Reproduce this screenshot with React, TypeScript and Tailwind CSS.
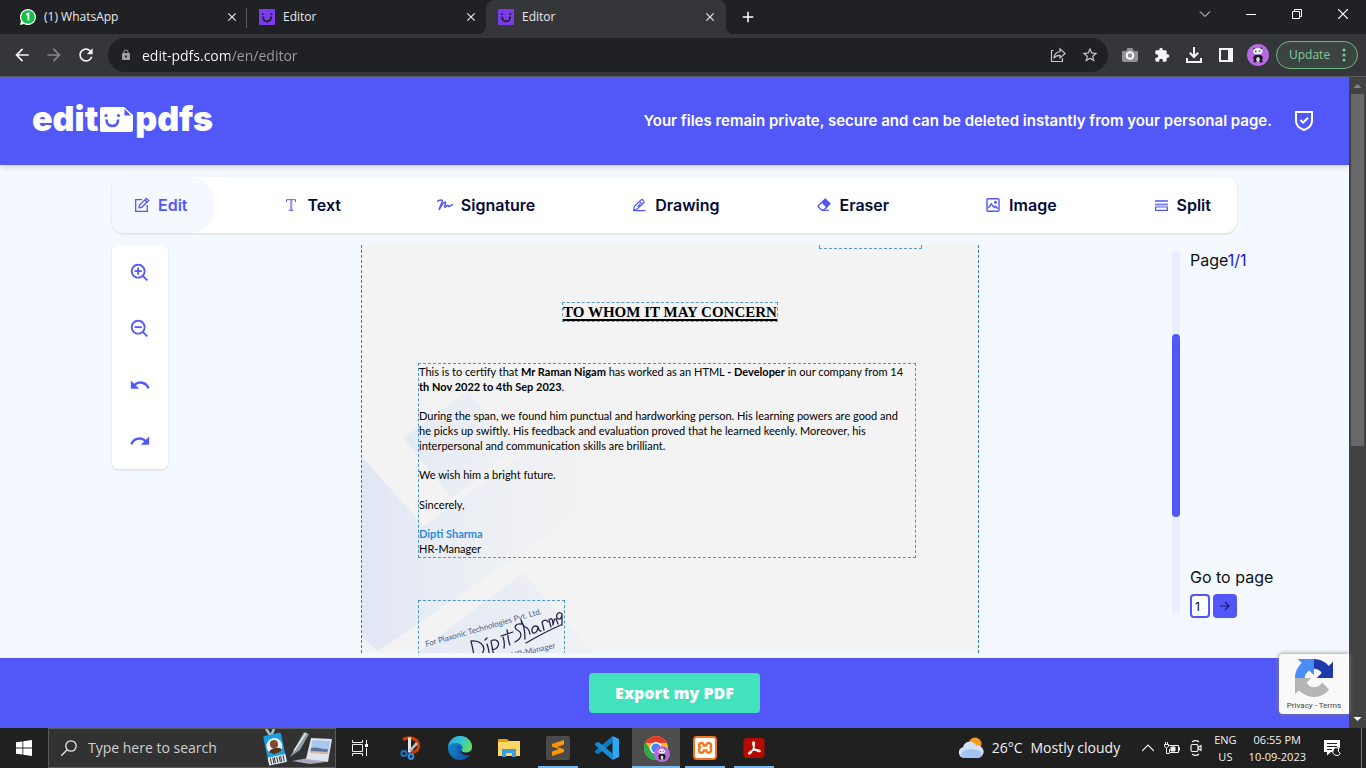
import type { ReactNode } from "react";
import { MdUndo, MdRedo, MdRefresh, MdArrowBack, MdArrowForward, MdLock, MdStarBorder, MdExtension, MdClose, MdAdd } from "react-icons/md";
import { BiZoomIn, BiZoomOut } from "react-icons/bi";
import { SiXampp } from "react-icons/si";

const ui = "font-['Open_Sans','Noto_Sans',sans-serif]";

function EditorMark() {
  return (
    <svg viewBox="0 0 16 16" className="size-4 shrink-0" aria-hidden="true">
      <rect width="16" height="16" rx="1" fill="#7c3aed" />
      <circle cx="3.8" cy="5" r="1" fill="#202124" />
      <circle cx="12.4" cy="5" r="1" fill="#202124" />
      <path d="M4.2 7.6v1a3.9 3.9 0 0 0 7.8 0v-1" fill="none" stroke="#202124" strokeWidth="1.9" />
    </svg>
  );
}

function WhatsAppMark() {
  return (
    <svg viewBox="0 0 16 16" className="size-4 shrink-0" aria-hidden="true">
      <path d="M0 16l1-4A8 8 0 1 1 4 15z" fill="#fff" />
      <circle cx="8" cy="8" r="6.8" fill="#12c143" />
      <path d="M6.2 5.6 8.4 4.4V11.6" stroke="#fff" strokeWidth="1.8" fill="none" />
    </svg>
  );
}

function Tab({ label, icon, active, divider }: { label: string; icon: ReactNode; active?: boolean; divider?: boolean }) {
  return (
    <div className={active ? "relative flex w-[240px] items-center rounded-t-lg bg-[#35363a] pl-3 pr-[9px]" : "relative flex w-[239px] items-center pl-3 pr-2"}>
      {active && (
        <>
          <span className="absolute bottom-0 right-full size-2 bg-[radial-gradient(circle_at_0_0,transparent_8px,#35363a_8px)]" />
          <span className="absolute bottom-0 left-full size-2 bg-[radial-gradient(circle_at_100%_0,transparent_8px,#35363a_8px)]" />
        </>
      )}
      <button type="button" className="flex flex-1 items-center gap-2 text-left text-xs text-[#e8eaed]">
        {icon}
        {label}
      </button>
      <button type="button" aria-label={"Close " + label} className="text-[#e8eaed]">
        <MdClose className="size-[14px]" />
      </button>
      {divider && <span className="absolute right-0 top-2 h-5 w-px bg-[#55575b]" />}
    </div>
  );
}

function Panda({ className }: { className: string }) {
  return (
    <svg viewBox="0 0 22 22" className={className} aria-hidden="true">
      <circle cx="11" cy="11" r="11" fill="#b66ae0" />
      <ellipse cx="11" cy="14" rx="4.800" ry="3.400" fill="#1c1720" />
      <ellipse cx="11" cy="15.5" rx="1.800" ry="2.600" fill="#ddd" />
      <circle cx="7.400" cy="4.8" r="1.100" fill="#1c1720" />
      <circle cx="14.200" cy="4.6" r="1.100" fill="#1c1720" />
      <ellipse cx="10.8" cy="7.200" rx="4.600" ry="3.300" fill="#eee" />
      <circle cx="8.8" cy="7.400" r=".8" fill="#333" />
      <circle cx="12.600" cy="7" r=".8" fill="#333" />
      <ellipse cx="8" cy="17.2" rx="1.500" ry="1.300" fill="#1c1720" />
      <ellipse cx="14" cy="17.2" rx="1.500" ry="1.300" fill="#1c1720" />
    </svg>
  );
}

function BrowserChrome() {
  return (
    <div className={ui + " shrink-0 bg-[#202124]"}>
      <div className="flex h-[34px] pl-2">
        <Tab label="(1) WhatsApp" icon={<WhatsAppMark />} divider />
        <Tab label="Editor" icon={<EditorMark />} />
        <Tab label="Editor" icon={<EditorMark />} active />
        <button type="button" aria-label="New tab" className="ml-[11px] flex w-[22px] items-center justify-center text-white">
          <MdAdd className="size-[18px]" />
        </button>
        <div className="ml-auto flex pb-[6px] text-white">
          <button type="button" aria-label="Search tabs" className="flex w-[46px] items-center justify-center">
            <svg viewBox="0 0 12 12" className="size-3" fill="none" stroke="currentColor"><path d="M1 3.5l5 5 5-5" /></svg>
          </button>
          <button type="button" aria-label="Minimize" className="flex w-[46px] items-center justify-center">
            <svg viewBox="0 0 10 10" className="size-[10px]" fill="none" stroke="currentColor"><path d="M0 5.5h10" /></svg>
          </button>
          <button type="button" aria-label="Restore" className="flex w-[46px] items-center justify-center">
            <svg viewBox="0 0 10 10" className="size-[10px]" fill="none" stroke="currentColor"><path d="M.5 2.5h7v7h-7zM2.5 2.500V.5h7v7h-2" /></svg>
          </button>
          <button type="button" aria-label="Close window" className="flex w-[46px] items-center justify-center">
            <svg viewBox="0 0 10 10" className="size-[10px]" fill="none" stroke="currentColor" strokeWidth="1.2"><path d="M0 0l10 10M10 0L0 10" /></svg>
          </button>
        </div>
      </div>
      <div className="flex h-[43px] items-center border-b border-[#5b5d62] bg-[#35363a] pl-3 pr-2">
        <div className="flex items-center gap-3 pr-3 text-[#f1f3f4]">
          <button type="button" aria-label="Back"><MdArrowBack className="size-5" /></button>
          <button type="button" aria-label="Forward" className="text-[#85878b]"><MdArrowForward className="size-5" /></button>
          <button type="button" aria-label="Reload"><MdRefresh className="size-5" /></button>
        </div>
        <div className="flex h-[34px] flex-1 items-center rounded-full bg-[#202124] pl-3 pr-[2px] text-[#c4c7cb]">
          <MdLock className="size-3 text-[#9aa0a6]" />
          <input
            aria-label="Address"
            defaultValue="edit-pdfs.com/en/editor"
            className="ml-[10px] h-6 min-w-0 flex-1 bg-[linear-gradient(90deg,#ffffff_88px,#9aa0a6_88px)] bg-clip-text text-sm text-transparent outline-none"
          />
          <button type="button" aria-label="Share" className="flex w-8 justify-center">
            <svg viewBox="0 0 16 16" className="size-4" fill="none" stroke="currentColor" strokeWidth="1.2">
              <path d="M3.500 3.500H1.500v11h11V11M10 4.500V1.800L15.200 6.500 10 11V8.400C7 8.300 5.200 9.200 3.800 11.200 4.300 7.500 6.300 5 10 4.500z" />
            </svg>
          </button>
          <button type="button" aria-label="Bookmark" className="flex w-8 justify-center"><MdStarBorder className="size-[18px] shrink-0" /></button>
        </div>
        <div className="flex items-center gap-4 pl-[14px] pr-[10px] text-[#f1f3f4]">
          <button type="button" aria-label="Screenshot extension">
            <svg viewBox="0 0 16 16" className="size-4" aria-hidden="true">
              <path d="M1 4h3l1.500-3h5L12 4h3a1 1 0 0 1 1 1v8a2 2 0 0 1-2 2H2a2 2 0 0 1-2-2V5a1 1 0 0 1 1-1z" fill="#8f9194" />
              <circle cx="8" cy="8.500" r="3.300" fill="none" stroke="#fff" strokeWidth="2" />
            </svg>
          </button>
          <button type="button" aria-label="Extensions"><MdExtension className="size-4" /></button>
          <button type="button" aria-label="Downloads">
            <svg viewBox="0 0 16 16" className="size-4" fill="none" stroke="currentColor" strokeWidth="2">
              <path d="M8 0v9.500M3.800 5.800 8 10l4.200-4.200M1 11v4h14v-4" />
            </svg>
          </button>
          <button type="button" aria-label="Side panel">
            <svg viewBox="0 0 16 16" className="size-4" aria-hidden="true"><path d="M1 1h14v14H1zM3 3v10h7V3z" fill="currentColor" fillRule="evenodd" /></svg>
          </button>
          <button type="button" aria-label="Profile" className="-mx-[3px]"><Panda className="size-[22px]" /></button>
        </div>
        <button type="button" className="flex h-7 w-[82px] items-center justify-between rounded-full border border-[#6fb985] bg-[#3b4441] pl-3 pr-[11px] text-xs text-[#81c995]">
          Update
          <svg viewBox="0 0 4 14" className="h-[14px] w-1" fill="currentColor"><circle cx="2" cy="2" r="1.500" /><circle cx="2" cy="7" r="1.500" /><circle cx="2" cy="12" r="1.500" /></svg>
        </button>
      </div>
    </div>
  );
}

function SiteHeader() {
  return (
    <header className="flex h-[88px] shrink-0 items-center justify-between bg-[#5158f7] pl-8 pr-9 text-white shadow-md">
      <a href="#home" aria-label="edit pdfs" className="flex items-center gap-[2px] pb-1 font-['Inter',sans-serif] text-[34px] font-black leading-10">
        <span>edit</span>
        <svg viewBox="0 0 33 26" className="mt-[2px] h-[26px] w-[33px]" aria-hidden="true">
          <path d="M2 0h22l9 8v15a2 2 0 0 1-2 2H2a2 2 0 0 1-2-2V2a2 2 0 0 1 2-2z" fill="#fff" />
          <path d="M24.500 2v6.500h6.500z" fill="#5158f7" />
          <circle cx="6" cy="8.500" r="1.600" fill="#5158f7" />
          <circle cx="18.500" cy="8.500" r="1.600" fill="#5158f7" />
          <path d="M6.500 12.500c0 4 2.400 6.500 5.800 6.500s5.800-2.500 5.800-6.500" fill="none" stroke="#5158f7" strokeWidth="2.600" />
        </svg>
        <span>pdfs</span>
      </a>
      <p className="flex items-center gap-[23px] font-['Inter',sans-serif] text-[15px] font-semibold">
        Your files remain private, secure and can be deleted instantly from your personal page.
        <svg viewBox="0 0 18 20" className="h-5 w-[18px]" fill="none" stroke="currentColor" strokeWidth="2" aria-hidden="true">
          <path d="M1 1h16v9c0 4.500-3.500 7.300-8 9-4.500-1.700-8-4.500-8-9z" />
          <path d="M5.500 9l2.600 2.600L13 6.800" />
        </svg>
      </p>
    </header>
  );
}

const tools: { label: string; icon: ReactNode }[] = [
  { label: "Edit", icon: <g strokeWidth="1.300"><path d="M8 2.700H1.700v11.600h11.600V8" /><path d="M5 10.800l.6-2.700 6.800-6.800 2.200 2.200-6.800 6.800zM10.800 3l2.200 2.200" /></g> },
  { label: "Text", icon: <g strokeWidth="1"><path d="M3.500 5V2.700h9V5M8 2.700v10.600M5.700 13.300h4.600" /><path d="M8.900 3v10" opacity=".5" /></g> },
  { label: "Signature", icon: <path strokeWidth="1.500" strokeLinecap="round" strokeLinejoin="round" d="M.5 4.200c2-1.200 4.800-1.600 4.900-.4.200 1.300-2.600 5.300-3.100 8.600C4.300 8.600 6.800 5 8.200 5c1.200 0-1.400 4.600-.2 5.200 1 .4 1.600-1.900 2.700-1.900.8 0 .5 1.100 1.300 1.100 1 0 2.200-1 3.500-1.900" /> },
  { label: "Drawing", icon: <g strokeWidth="1.200"><path d="M3 13.700h11.500M2.600 13.400l.9-4 6.600-6.600a1 1 0 0 1 1.400 0l1.300 1.300a1 1 0 0 1 0 1.400l-6.600 6.600zM8.500 4.600l2.600 2.600M6.500 9.800 9.300 7" /></g> },
  { label: "Eraser", icon: <g strokeWidth="1.300"><path d="M9.200 2 14 6.800l-3.200 3.200L6 5.200z" fill="currentColor" strokeLinejoin="round" /><path d="M6 5.200 2.300 8.700c-.3.400-.3.800 0 1.100l3.200 3.200h2.400l3-3M6 13.300h6.800" /></g> },
  { label: "Image", icon: <g strokeWidth="1.400"><rect x="2" y="1.700" width="12" height="12.600" rx="1" /><path d="M3.300 11l3-4 3 3.600 1.300-1.300 2.200 2.400" /><circle cx="10.500" cy="5.300" r=".8" /></g> },
  { label: "Split", icon: <g><path strokeWidth="2" opacity=".75" d="M2 4h13M2 7.500h13" /><path strokeWidth="1.200" d="M2.600 10h11.800v3.400H2.600z" /></g> },
];

function Toolbar() {
  return (
    <nav aria-label="Tools" className="mx-28 mt-3 flex h-14 shrink-0 justify-between rounded-xl bg-white shadow-sm">
      {tools.map((tool, i) => (
        <button
          key={tool.label}
          type="button"
          className={
            i === 0
              ? "flex items-center gap-2 rounded-l-xl rounded-r-3xl bg-[#f4f8ff] pl-[22px] pr-[26px] text-base font-semibold text-[#5158f7]"
              : "flex items-center gap-2 pl-[22px] pr-[26px] text-base font-semibold text-[#030a38]"
          }
        >
          <svg viewBox="0 0 16 16" className="size-4 text-[#5158f7]" fill="none" stroke="currentColor" aria-hidden="true">{tool.icon}</svg>
          {tool.label}
        </button>
      ))}
    </nav>
  );
}

function Stamp() {
  return (
    <svg viewBox="0 0 147 80" className="absolute left-0 top-0 h-20 w-[147px]" aria-hidden="true">
      <g className="font-['Lato',sans-serif] text-[8px]" fill="#4f5f8e">
        <text x="7" y="46" transform="rotate(-16 7 46)">For Plaxonic Technologies Pvt. Ltd.</text>
        <text x="93" y="57" transform="rotate(-13 93 57)">HR-Manager</text>
      </g>
      <path
        transform="translate(-2 1)"
        d="M57 56c0-6-2-12-3-17 8-1 15 4 12 11-2 5-7 6-10 5M72 51c0-3-1-6-2-9M68 38l2-2M78 62c-1-8-3-17-4-23 5-3 9 1 7 5-1 3-4 4-6 3M87 46c1-5 0-8-1-11M93 43c-2-4-2-10-3-15M84 34l12-4M105 22c-6-1-9 3-5 6 5 2 6 8-2 12M108 37c0-6-1-14-4-19 2 11 7 3 9 14M121 25c-4-3-8 2-5 6 3 1 5-3 5-6 1 3 2 5 3 4M127 28l-2-8c3-3 5-2 6 0M134 25l-2-7c3-4 4 1 4 5 1-4 1-7 3-6l2 5M145 12c-4-4-7 2-4 5 3 1 4-3 4-5l0 11M109 41c12-7 21-12 35-18"
        fill="none"
        stroke="#27234f"
        strokeWidth="1.300"
        strokeLinecap="round"
        strokeLinejoin="round"
      />
    </svg>
  );
}

function Watermark() {
  return (
    <svg viewBox="0 0 618 408" className="absolute left-0 top-0 h-[408px] w-[618px]" aria-hidden="true">
      <defs>
        <linearGradient id="band" x1="0" x2="1">
          <stop offset="0" stopColor="#e1e7f4" />
          <stop offset=".3" stopColor="#eaeef4" />
          <stop offset=".6" stopColor="#f0f1f3" />
          <stop offset="1" stopColor="#f3f3f3" />
        </linearGradient>
        <linearGradient id="tile" x1="0" x2="1">
          <stop offset="0" stopColor="#e4eaf4" />
          <stop offset="1" stopColor="#eff1f4" />
        </linearGradient>
      </defs>
      <path d="M0 212 62 281 270 130 310 205 16 406 0 392z" fill="url(#band)" />
      <path d="M41 193 106 146 151 204 90 253z" fill="url(#tile)" />
      <path d="M55 408 161 328 231 408z" fill="url(#tile)" />
    </svg>
  );
}

function Certificate() {
  return (
    <article className="relative w-[618px] shrink-0 overflow-hidden border-x border-dashed border-[#2f80c4] bg-[#f3f3f3] text-black">
      <Watermark />
      <span className="absolute right-14 top-0 h-1 w-[103px] border border-t-0 border-dashed border-[#5b9bd5]" />
      <h1 className="relative mx-auto mt-[57px] w-fit border border-dashed border-[#5b9bd5] font-['Liberation_Serif',serif] text-[15px] font-bold leading-[18px] underline decoration-2 underline-offset-2">
        TO WHOM IT MAY CONCERN
      </h1>
      <div className="relative ml-14 mt-[41px] w-[498px] whitespace-nowrap border border-dashed border-[#4d94d1] pb-px font-['Lato',sans-serif] text-[11px] leading-[15px]">
        <p>
          This is to certify that <b>Mr Raman Nigam</b> has worked as an HTML <b>- Developer</b> in our company from 14
          <br />
          <b>th Nov 2022 to 4th Sep 2023</b>.
        </p>
        <p className="mt-[14px]">
          During the span, we found him punctual and hardworking person. His learning powers are good and
          <br />
          he picks up swiftly. His feedback and evaluation proved that he learned keenly. Moreover, his
          <br />
          interpersonal and communication skills are brilliant.
        </p>
        <p className="mt-[14px]">We wish him a bright future.</p>
        <p className="mt-[15px]">Sincerely,</p>
        <p className="mt-[14px] font-bold text-[#2a8be0]">Dipti Sharma</p>
        <p>HR-Manager</p>
      </div>
      <div className="relative ml-14 mt-[42px] h-20 w-[147px] border border-dashed border-[#4d94d1]">
        <Stamp />
      </div>
    </article>
  );
}

function SideTools() {
  const items = [
    { label: "Zoom in", icon: <BiZoomIn className="size-[22px]" /> },
    { label: "Zoom out", icon: <BiZoomOut className="size-[22px]" /> },
    { label: "Undo", icon: <MdUndo className="size-[22px]" /> },
    { label: "Redo", icon: <MdRedo className="size-[22px]" /> },
  ];
  return (
    <div className="flex w-14 flex-col self-start rounded-md bg-white text-[#5158f7] shadow-sm">
      {items.map((item) => (
        <button key={item.label} type="button" aria-label={item.label} className="flex h-14 items-center justify-center">
          {item.icon}
        </button>
      ))}
    </div>
  );
}

function Pager() {
  return (
    <aside className="flex w-[177px] shrink-0 gap-[10px]">
      <div className="mb-10 mt-[7px] flex w-2 flex-col bg-[#e9edfd]">
        <span className="flex-[82]" />
        <span className="flex-[183] rounded-full bg-[#5158f7]" />
        <span className="flex-[96]" />
      </div>
      <div className="mb-[35px] mt-1 flex flex-1 flex-col justify-between text-base leading-[22px] text-[#111]">
        <p>Page<span className="text-[#1a12f5]">1/1</span></p>
        <form>
          <label htmlFor="page">Go to page</label>
          <div className="mt-[6px] flex gap-[3px]">
            <input id="page" defaultValue="1" className="h-6 w-5 rounded border-2 border-[#5158f7] bg-white pl-[3px] text-xs text-black" />
            <button type="button" aria-label="Go" className="flex size-6 items-center justify-center rounded-sm bg-[#5158f7] text-[#1c1f6b]">
              <svg viewBox="0 0 10 10" className="size-[10px]" fill="none" stroke="currentColor" strokeWidth="1.200"><path d="M0 5h9M5 1l4 4-4 4" /></svg>
            </button>
          </div>
        </form>
      </div>
    </aside>
  );
}

function Recaptcha() {
  return (
    <div className="absolute bottom-[14px] right-0 flex h-[60px] w-[70px] flex-col items-center rounded-l-sm bg-[#f9f9f9] pt-[5px] shadow-[0_0_5px_gray]">
      <svg viewBox="0 0 64 64" className="size-[38px]" aria-hidden="true">
        <path fill="#1C3AA9" d="M64 31.955l-.033-1.370V4.687l-7.160 7.160C50.948 4.674 42.033.093 32.050.093c-10.400 0-19.622 4.960-25.458 12.640l11.736 11.860a15.550 15.550 0 0 1 4.754-5.334c2.050-1.600 4.952-2.906 8.968-2.906.485 0 .860.057 1.135.163 4.976.393 9.288 3.140 11.828 7.124l-8.307 8.307L64 31.953" />
        <path fill="#4A8DF5" d="M31.862.094l-1.370.033H4.594l7.160 7.160C4.580 13.147 0 22.060 0 32.046c0 10.400 4.960 19.622 12.640 25.458L24.500 45.768a15.550 15.550 0 0 1-5.334-4.754c-1.600-2.050-2.906-4.952-2.906-8.968 0-.485.057-.860.163-1.135.393-4.976 3.140-9.288 7.124-11.828l8.307 8.307L31.860.095" />
        <path fill="#B5B5B5" d="M.001 32.045l.033 1.370v25.898l7.160-7.160c5.860 7.173 14.774 11.754 24.760 11.754 10.400 0 19.622-4.960 25.458-12.640l-11.736-11.860a15.550 15.550 0 0 1-4.754 5.334c-2.050 1.600-4.952 2.906-8.968 2.906-.485 0-.860-.057-1.135-.163-4.976-.393-9.288-3.140-11.828-7.124l8.307-8.307c-10.522.040-22.400.066-27.295-.005" />
      </svg>
      <p className="mt-[3px] whitespace-nowrap font-['Roboto',sans-serif] text-[8px] leading-3 text-[#444]">
        <a href="#privacy">Privacy</a> - <a href="#terms">Terms</a>
      </p>
    </div>
  );
}

function Scrollbar() {
  return (
    <div className="flex w-[17px] shrink-0 flex-col items-center bg-[#424242]">
      <svg viewBox="0 0 17 17" className="size-[17px]" aria-hidden="true"><path d="M8.500 7l4 4h-8z" fill="#868686" /></svg>
      <div className="w-[13px] flex-1"><div className="h-[57%] bg-[#686868]" /></div>
      <svg viewBox="0 0 17 17" className="size-[17px]" aria-hidden="true"><path d="M4.500 6h8l-4 4z" fill="#fff" /></svg>
    </div>
  );
}

function SnipIcon() {
  return (
    <svg viewBox="0 0 24 24" className="size-6" aria-hidden="true">
      <path d="M4 3.500C12-.5 20 3.500 19.500 10.500c-.3 3.500-3 5.500-6.500 6" fill="none" stroke="#d83b01" strokeWidth="3.200" />
      <path d="M9 1.500h3v15H9z" fill="#e8e8e8" />
      <path d="M17 6l2 2-7 8-2-2z" fill="#b9b9b9" />
      <circle cx="5" cy="17.500" r="2.600" fill="none" stroke="#1777c9" strokeWidth="2" />
      <circle cx="12" cy="20.500" r="2.400" fill="none" stroke="#2a95e6" strokeWidth="2" />
    </svg>
  );
}

function EdgeIcon() {
  return (
    <svg viewBox="0 0 24 24" className="size-6" aria-hidden="true">
      <defs>
        <linearGradient id="edgeTop" x1="0" x2="1" y1=".2" y2=".6"><stop offset="0" stopColor="#2fa8e0" /><stop offset=".5" stopColor="#35c5d0" /><stop offset="1" stopColor="#67df5a" /></linearGradient>
        <linearGradient id="edgeLow" x1="0" x2="1" y2="1"><stop offset="0" stopColor="#1593dc" /><stop offset="1" stopColor="#0c4f9e" /></linearGradient>
      </defs>
      <circle cx="12" cy="12" r="12" fill="url(#edgeLow)" />
      <path d="M0 11C1 4.500 6 0 12 0c7 0 12 5 12 10.500 0 4-3 6-6.500 6-3 0-4-1-4-2s1-1.300 1-3c0-2.500-3-4.500-7-4.500-3.500 0-6.500 1.500-7.500 4z" fill="url(#edgeTop)" />
      <path d="M8.500 11.500c-.5 5 3 9.500 8 9.500 2 0 4-.5 6-2-3 1-9 .5-9-4.500 0-1.500 1-1.500 1-3 0-1-1-2-2.500-2s-3.300.5-3.500 2z" fill="#155fb0" />
      <path d="M24 14.500c-4 3-9 3-10.500 0l-1 .5c1 4 6 5.500 10 3.500z" fill="#202020" />
    </svg>
  );
}

function FolderIcon() {
  return (
    <svg viewBox="0 0 24 24" className="size-6" aria-hidden="true">
      <path d="M1 3h9l2 2v3H1z" fill="#e6a100" />
      <path d="M1 6h10l1-1h11v15H1z" fill="#ffd766" />
      <path d="M5 13h14v8h-4v-4H9v4H5z" fill="#3f9be0" />
    </svg>
  );
}

function SublimeIcon() {
  return (
    <svg viewBox="0 0 24 24" className="size-6" aria-hidden="true">
      <rect width="24" height="24" rx="2" fill="#4a4a4a" />
      <path d="M6 8l12-4v4.500L11 11l7 2.300V16L6 20v-4.500l7-2.500-7-2.500z" fill="#ff9800" />
    </svg>
  );
}

function CodeIcon() {
  return (
    <svg viewBox="0 0 24 24" className="size-6" aria-hidden="true">
      <path d="M17.500 0v6.500L3.300 18.200 0 16.500V15z" fill="#0b7bc4" />
      <path d="M0 9V7.500L3.300 5.800 17.500 17.500V24z" fill="#1a8ad6" />
      <path d="M17.500 0 24 3v18l-6.500 3z" fill="#2fa8f5" />
    </svg>
  );
}

function ChromeIcon() {
  return (
    <svg viewBox="0 0 26 26" className="size-[26px]" aria-hidden="true">
      <circle cx="13" cy="13" r="12" fill="#fbc116" />
      <path d="M2.600 7A12 12 0 0 1 23.400 7L13 8z" fill="#e33b2e" />
      <path d="M2.600 7 7.800 16 13 19v6A12 12 0 0 1 2.600 7z" fill="#2da94f" />
      <path d="M2.600 7H23.400" stroke="#e33b2e" strokeWidth="2" />
      <circle cx="13" cy="13" r="6" fill="#fff" />
      <circle cx="13" cy="13" r="4.600" fill="#4285f4" />
    </svg>
  );
}

function AcrobatIcon() {
  return (
    <svg viewBox="0 0 24 24" className="size-6" aria-hidden="true">
      <rect x="1.500" y="2" width="21" height="20" rx="3.500" fill="#b30b00" />
      <path d="M11.500 6c1.500 0 1 3.500 0 6s-3 6-4.300 6c-1.700 0 .3-3 5-4 3.500-.8 6 0 6 1 0 1.500-4.200 0-5.700-2.300C10.800 10 10.300 6 11.500 6z" fill="none" stroke="#fff" strokeWidth="1.300" />
    </svg>
  );
}

function SearchArt() {
  return (
    <svg viewBox="0 0 70 38" className="mr-[2px] h-[38px] w-[70px] shrink-0" aria-hidden="true">
      <path d="M3 0l5 7L11 0" fill="none" stroke="#a9c3cf" strokeWidth="2.500" />
      <g transform="rotate(-12 12 20)">
        <rect x="3" y="5" width="18" height="30" rx="1.500" fill="#1a9fdc" />
        <rect x="3" y="27" width="18" height="8" fill="#e9edf0" />
        <path d="M5.500 28v6M8 28v6M9.500 28v6M12 28v6M14.500 28v6M16 28v6M18.500 28v6" stroke="#333" />
        <circle cx="12" cy="17" r="8" fill="#e4eef2" />
        <circle cx="12" cy="15" r="4" fill="#7b4a2d" />
        <path d="M5.500 22c2-4 11-4 13 0-3 4-10 4-13 0z" fill="#5a3320" />
      </g>
      <path d="M41 3l5 2-9 16-10 7z" fill="#8e9da4" />
      <path d="M43 4L31 22" stroke="#dfe6e9" strokeWidth="1.500" />
      <path d="M29 32l16-3 18 4-16 2z" fill="#a9a7bd" />
      <path d="M48 9l21 1-4 23-22-3z" fill="#dfe3ec" />
      <path d="M49.500 11l17.500 1-2 13-17.500-2z" fill="#a9c6ee" />
      <path d="M48 19c6-2 11 2 17 1l-1 5-16.500-2z" fill="#5b7496" />
      <path d="M48 22l17 1-1 2-16.500-1z" fill="#d9b9a0" />
    </svg>
  );
}

function TaskButton({ label, children, state }: { label: string; children: ReactNode; state?: "open" | "active" }) {
  return (
    <button
      type="button"
      aria-label={label}
      className={state === "active" ? "relative flex w-12 items-center justify-center bg-[#4d4d4d]" : "relative flex w-12 items-center justify-center"}
    >
      {children}
      {state === "open" && <span className="absolute inset-x-1 bottom-0 h-[2px] bg-[#76b9ed]" />}
      {state === "active" && <span className="absolute inset-x-0 bottom-0 h-[2px] bg-[#76b9ed]" />}
    </button>
  );
}

function Taskbar() {
  return (
    <footer className={ui + " flex h-10 shrink-0 bg-[#202020] text-[#f2f2f2]"}>
      <button type="button" aria-label="Start" className="flex w-12 items-center justify-center">
        <svg viewBox="0 0 16 16" className="size-4" fill="#fff"><path d="M0 2.300 6.500 1.400v6.200H0zM7.300 1.300 16 0v7.600H7.300zM0 8.400h6.500v6.200L0 13.700zM7.300 8.400H16V16l-8.700-1.300z" /></svg>
      </button>
      <label className="flex w-72 items-center border border-[#5a5a5a] bg-[#323232] pl-3">
        <svg viewBox="0 0 16 16" className="size-4 shrink-0" fill="none" stroke="#e8e8e8" strokeWidth="1.300"><circle cx="10" cy="6" r="5.200" /><path d="M6.200 9.800 0 16" /></svg>
        <input aria-label="Search" placeholder="Type here to search" className="ml-[11px] min-w-0 flex-1 bg-transparent text-sm outline-none placeholder:text-[#cfcfcf]" />
        <SearchArt />
      </label>
      <TaskButton label="Task view">
        <svg viewBox="0 0 16 16" className="size-4" fill="none" stroke="#eee"><path d="M.500 0v2.500h10V0M.500 4.500h10v7H.500zM.500 16v-2.500h10V16M14.500 0v4M14.500 8v8" /><path d="M13 4h3v3h-3z" fill="#fff" stroke="none" /></svg>
      </TaskButton>
      <div className="ml-[3px] flex gap-px">
        <TaskButton label="Snipping Tool"><SnipIcon /></TaskButton>
        <TaskButton label="Edge"><EdgeIcon /></TaskButton>
        <TaskButton label="File Explorer"><FolderIcon /></TaskButton>
        <TaskButton label="Sublime Text" state="open"><SublimeIcon /></TaskButton>
        <TaskButton label="Visual Studio Code"><CodeIcon /></TaskButton>
        <TaskButton label="Chrome" state="active">
          <ChromeIcon />
          <Panda className="absolute bottom-[6px] right-[10px] size-4" />
        </TaskButton>
        <TaskButton label="XAMPP" state="open">
          <span className="flex size-6 items-center justify-center rounded-sm bg-[#f0771f] text-white"><SiXampp className="size-5" /></span>
        </TaskButton>
        <TaskButton label="Acrobat" state="open"><AcrobatIcon /></TaskButton>
      </div>
      <div className="ml-auto flex items-center">
        <button type="button" className="flex items-center gap-2 whitespace-nowrap text-sm">
          <svg viewBox="0 0 26 22" className="h-[22px] w-[26px]" aria-hidden="true">
            <circle cx="17" cy="7" r="6.500" fill="#f59a1b" />
            <path d="M6 21a5.500 5.500 0 0 1-1-10.800A7 7 0 0 1 18 8.500a5.500 5.500 0 0 1 2.500 12.500z" fill="#d3e1f8" />
            <path d="M6 21a4 4 0 0 1 0-7.500c4-2 14-2 17.500 2A4.500 4.500 0 0 1 20 21z" fill="#a4c3f0" />
          </svg>
          <span>26°C</span>
          <span>Mostly cloudy</span>
        </button>
        <button type="button" aria-label="Hidden icons" className="ml-[22px]">
          <svg viewBox="0 0 12 12" className="size-3" fill="none" stroke="currentColor" strokeWidth="1.200"><path d="M0 9l6-6 6 6" /></svg>
        </button>
        <svg viewBox="0 0 16 12" className="ml-[10px] h-3 w-4" fill="none" stroke="currentColor" aria-hidden="true"><path d="M5 3.500h9.500v7h-9V7M14.500 5.500h1v3M1.500 0v2M3.500 0v2M.500 2.500h4v2l-2 1.500-2-1.500zM2.500 6v5.500h3" /><path d="M7 5h4v4H7z" fill="currentColor" /></svg>
        <svg viewBox="0 0 12 16" className="ml-[10px] h-4 w-3" fill="none" stroke="currentColor" strokeWidth="1.200" aria-hidden="true"><rect x="1" y="4.500" width="7" height="7" rx="1.500" /><path d="M8 7.500 11 5.500v5L8 8.500M2 2C4 .3 7 .3 9 2M2 14c2 1.700 5 1.700 7 0" /></svg>
        <button type="button" className="ml-3 text-center text-[11px] leading-[17px]">ENG<br />US</button>
        <button type="button" className="ml-3 whitespace-nowrap text-center text-[11px] leading-[17px]">06:55 PM<br />10-09-2023</button>
        <button type="button" aria-label="Notifications" className="ml-[18px] mr-[19px]">
          <svg viewBox="0 0 18 16" className="h-4 w-[18px]" aria-hidden="true"><path d="M0 0h16v12H7l-4 3.500V12H0z" fill="#fff" /><path d="M3 3.500h10M3 6.500h10M3 9.500h5" stroke="#202020" /><circle cx="13" cy="11.500" r="4.200" fill="#202020" /><path d="M14.500 8a4 4 0 1 0 1.800 5.500A4.500 4.500 0 0 1 14.500 8z" fill="none" stroke="#fff" /></svg>
        </button>
        <span className="mr-1 h-10 w-px bg-[#777]" />
      </div>
    </footer>
  );
}

export default function App() {
  return (
    <div className="flex h-screen flex-col overflow-hidden">
      <BrowserChrome />
      <div className="flex min-h-0 flex-1">
        <main className="relative flex min-w-0 flex-1 flex-col bg-[#f4f8ff] font-['Inter',sans-serif]">
          <SiteHeader />
          <Toolbar />
          <section className="mb-[5px] mt-3 flex min-h-0 flex-1 pl-28">
            <SideTools />
            <div className="flex min-w-0 flex-1 justify-center"><Certificate /></div>
            <Pager />
          </section>
          <div className="flex h-[70px] shrink-0 items-center justify-center bg-[#5158f7]">
            <button type="button" className="h-10 rounded bg-[#42e3bc] px-[26px] font-['Noto_Sans',sans-serif] text-base font-black text-white">Export my PDF</button>
          </div>
          <Recaptcha />
        </main>
        <Scrollbar />
      </div>
      <Taskbar />
    </div>
  );
}
